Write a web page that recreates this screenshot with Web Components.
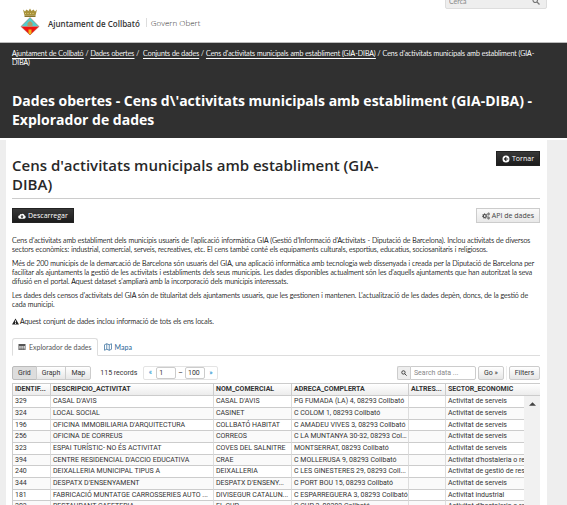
<!DOCTYPE html>
<html lang="ca">
<head>
<meta charset="utf-8">
<title>Dades obertes - Ajuntament de Collbató</title>
<style>
    * { box-sizing: border-box; }
    body {
        --title-font: "Open Sans", sans-serif;
        --grid-font: Roboto, "Liberation Sans", sans-serif;
        margin: 0;
        height: 100vh;
        overflow: hidden;
        background: #eee;
        color: #444;
        font-family: Lato, "Open Sans", sans-serif;
        font-size: 7px;
        line-height: 9px;
    }
</style>
</head>
<body>
<site-header></site-header>
<page-banner>Dades obertes - Cens d\'activitats municipals amb establiment (GIA-DIBA) - Explorador de dades</page-banner>
<dataset-page>
    <span slot="title">Cens d'activitats municipals amb establiment (GIA-DIBA)</span>
    <icon-button slot="back" kind="dark" icon="back">Tornar</icon-button>
    <icon-button slot="download" kind="dark" icon="cloud">Descarregar</icon-button>
    <icon-button slot="api" icon="cogs">API de dades</icon-button>
    <dataset-text></dataset-text>
    <tab-bar></tab-bar>
    <grid-toolbar></grid-toolbar>
    <data-grid></data-grid>
</dataset-page>

<script>
const icons = {
    cloud: '<path d="M13 7.2A3.6 3.6 0 0 0 7 4.5 2.2 2.2 0 0 0 3.6 6.6 3.4 3.4 0 0 0 4 13.5h8.2A3.2 3.2 0 0 0 13 7.2zM8 12.5 4.7 9.2h2.1V6.5h2.4v2.7h2.1z"/>',
    back: '<path fill-rule="evenodd" d="M8 1a7 7 0 1 0 0 14A7 7 0 0 0 8 1zM3.5 8l4.3-4.3 1.7 1.7L8 6.9h4.5v2.2H8l1.5 1.5-1.7 1.7z"/>',
    cogs: '<g fill="none" stroke="currentColor"><circle cx="5.5" cy="8" r="3" stroke-width="2.4"/><circle cx="5.5" cy="8" r="4.7" stroke-width="1.6" stroke-dasharray="2 1.7"/><circle cx="13" cy="4" r="1.6" stroke-width="1.5"/><circle cx="13" cy="12" r="1.6" stroke-width="1.5"/><circle cx="13" cy="4" r="2.6" stroke-dasharray="1 1"/><circle cx="13" cy="12" r="2.6" stroke-dasharray="1 1"/></g>',
    warning: '<path fill-rule="evenodd" d="M8 1 16 15H0zM7 5.5v5h2v-5zM7 11.5v2h2v-2z"/>',
    table: '<path fill-rule="evenodd" d="M1 2h14v12H1zM2.5 6v1.5h3V6zm4.2 0v1.5h3V6zm4.2 0v1.5h3V6zM2.5 8.6v1.5h3V8.6zm4.2 0v1.5h3V8.6zm4.2 0v1.5h3V8.6zM2.5 11.2v1.5h3v-1.5zm4.2 0v1.5h3v-1.5zm4.2 0v1.5h3v-1.5z"/>',
    map: '<path fill="none" stroke="currentColor" stroke-width="1.4" d="M1 3.5 5.5 1.5l5 2L15 1.5v11l-4.5 2-5-2-4.5 2zM5.5 1.5v11M10.5 3.5v11"/>',
    search: '<g fill="none" stroke="currentColor" stroke-width="2.4"><circle cx="6.5" cy="6.5" r="4.5"/><path d="m10 10 5 5"/></g>'
};

const icon = name => `<svg viewBox="0 0 16 16" fill="currentColor" aria-hidden="true">${icons[name]}</svg>`;

class SiteHeader extends HTMLElement {
    connectedCallback() {
        this.attachShadow({mode: 'open'}).innerHTML = `
            <style>
                :host {
                    display: flex;
                    justify-content: space-between;
                    align-items: flex-start;
                    height: 42px;
                    padding: 0 20px;
                    background: #fff;
                    overflow: hidden;
                    box-sizing: border-box;
                }
                .brand {
                    display: flex;
                    align-items: center;
                    padding-top: 8px;
                    font-family: var(--title-font);
                    font-size: 8px;
                    color: #333;
                }
                .crest { width: 20px; height: 28px; margin-right: 8px; }
                strong { font-weight: 600; padding-top: 2px; }
                .section {
                    margin-left: 6px;
                    padding-left: 4px;
                    border-left: 1px solid #ddd;
                    font-weight: 300;
                }
                form {
                    display: flex;
                    align-items: center;
                    width: 102px;
                    height: 16px;
                    margin-top: -7px;
                    padding: 0 6px 0 3px;
                    box-sizing: border-box;
                    border: 1px solid #ddd;
                    border-radius: 2px;
                    background: #eee;
                }
                input {
                    flex: 1;
                    min-width: 0;
                    padding: 0;
                    border: 0;
                    background: none;
                    font: inherit;
                }
                input::placeholder { color: #888; }
                button { display: flex; padding: 0; border: 0; background: none; color: #777; }
                button svg { width: 8px; height: 8px; }
            </style>
            <div class="brand">
                <svg class="crest" viewBox="0 0 40 56" aria-hidden="true">
                    <path d="M6 3l4 4 3-4 4 3 3-5 3 5 4-3 3 4 4-4-3 12H9z" fill="#a8923a"/>
                    <path d="M9 15h22v3H9z" fill="#8a7426"/>
                    <path d="M10 11h20" stroke="#e0cf7a" stroke-width="2" stroke-dasharray="2 3"/>
                    <path d="M20 19 38 37H2z" fill="#4fd0cf"/>
                    <path d="M2 37h36L20 54z" fill="#f01410"/>
                    <path d="M15 37v-7l5-4 5 4v7z" fill="#b09a68"/>
                    <path d="M17 43h6v8l-3 3-3-3z" fill="#f2b41d"/>
                    <path d="M20 19 38 37 20 54 2 37z" fill="none" stroke="#a35b45"/>
                </svg>
                <strong>Ajuntament de Collbató</strong>
                <span class="section">Govern Obert</span>
            </div>
            <form>
                <input type="search" placeholder="Cerca" aria-label="Cerca">
                <button type="button" aria-label="Cerca">${icon('search')}</button>
            </form>
        `;
    }
}

class PageBanner extends HTMLElement {
    connectedCallback() {
        this.attachShadow({mode: 'open'}).innerHTML = `
            <style>
                :host {
                    display: block;
                    height: 98px;
                    box-sizing: border-box;
                    padding: 6px 27px 0 12px;
                    background: #303030;
                    border-top: 1px solid #bbb;
                    border-bottom: 2px solid #fff;
                    color: #fff;
                }
                nav { height: 42px; font-weight: 300; text-shadow: 0 0 0 currentColor; }
                a {
                    color: #fff;
                    text-decoration: underline;
                    text-underline-offset: 2px;
                }
                h1 {
                    margin: 0;
                    font-family: var(--title-font);
                    font-size: 14px;
                    line-height: 19px;
                    font-weight: 700;
                }
            </style>
            <nav>
                <a href="#">Ajuntament de Collbató</a> <span>/</span>
                <a href="#">Dades obertes</a> <span>/</span> &nbsp;<a href="#">Conjunts de dades</a> <span>/</span>
                <a href="#">Cens d'activitats municipals amb establiment (GIA-DIBA)</a> <span>/</span>
                <span>Cens d'activitats municipals amb establiment (GIA-<wbr>DIBA)</span>
            </nav>
            <h1><slot></slot></h1>
        `;
    }
}

class IconButton extends HTMLElement {
    connectedCallback() {
        this.attachShadow({mode: 'open'}).innerHTML = `
            <style>
                :host { display: inline-flex; }
                button {
                    display: flex;
                    align-items: center;
                    gap: 2px;
                    height: 15px;
                    padding: 0 5px;
                    border: 1px solid #ccc;
                    background: linear-gradient(#fafafa, #e8e8e8);
                    color: #444;
                    font: inherit;
                    font-family: var(--title-font);
                    white-space: nowrap;
                }
                :host([kind="dark"]) button {
                    border-color: #222;
                    background: linear-gradient(#383838, #1c1c1c);
                    color: #fff;
                }
                svg { width: 8px; height: 8px; }
            </style>
            <button type="button">${icon(this.getAttribute('icon'))}<span><slot></slot></span></button>
        `;
    }
}

class DatasetPage extends HTMLElement {
    connectedCallback() {
        this.attachShadow({mode: 'open'}).innerHTML = `
            <style>
                :host {
                    display: block;
                    margin: 0 20px 0 6px;
                    padding: 11px 7px 0 6px;
                    background: #fff;
                }
                header, .actions { display: flex; justify-content: space-between; align-items: flex-start; }
                header { border-bottom: 1px solid #ccc; }
                h2 {
                    flex: 0 1 400px;
                    margin: 0;
                    padding: 5px 0 4px;
                    color: #282828;
                    font-family: var(--title-font);
                    font-size: 15px;
                    line-height: 19px;
                    font-weight: 600;
                }
                .actions { padding: 9px 0 13px; }
            </style>
            <header>
                <h2><slot name="title"></slot></h2>
                <slot name="back"></slot>
            </header>
            <div class="actions">
                <slot name="download"></slot>
                <slot name="api"></slot>
            </div>
            <slot></slot>
        `;
    }
}

class DatasetText extends HTMLElement {
    connectedCallback() {
        this.attachShadow({mode: 'open'}).innerHTML = `
            <style>
                :host { display: block; color: #222; font-weight: 300; text-shadow: 0 0 0 currentColor; }
                p { margin: 0 0 5px; }
                .note { display: flex; align-items: center; gap: 1px; margin: 8px 0 12px; }
                svg { width: 7px; height: 7px; }
            </style>
            <p>Cens d'activitats amb establiment dels municipis usuaris de l'aplicació informàtica GIA (Gestió d'Informació d'Activitats - Diputació de Barcelona). Inclou activitats de diversos sectors econòmics: industrial, comercial, serveis, recreatives, etc. El cens també conté els equipaments culturals, esportius, educatius, sociosanitaris i religiosos.</p>
            <p>Més de 200 municipis de la demarcació de Barcelona són usuaris del GIA, una aplicació informàtica amb tecnologia web dissenyada i creada per la Diputació de Barcelona per facilitar als ajuntaments la gestió de les activitats i establiments dels seus municipis. Les dades disponibles actualment són les d'aquells ajuntaments que han autoritzat la seva difusió en el portal. Aquest dataset s'ampliarà amb la incorporació dels municipis interessats.</p>
            <p>Les dades dels censos d'activitats del GIA són de titularitat dels ajuntaments usuaris, que les gestionen i mantenen. L'actualització de les dades depèn, doncs, de la gestió de cada municipi.</p>
            <p class="note">${icon('warning')}<span>Aquest conjunt de dades inclou informació de tots els ens locals.</span></p>
        `;
    }
}

class TabBar extends HTMLElement {
    connectedCallback() {
        this.attachShadow({mode: 'open'}).innerHTML = `
            <style>
                :host { display: flex; border-bottom: 1px solid #ddd; margin-bottom: 10px; }
                a {
                    display: flex;
                    align-items: center;
                    gap: 3px;
                    height: 18px;
                    margin-bottom: -1px;
                    padding: 0 5px;
                    box-sizing: border-box;
                    border: 1px solid transparent;
                    color: #2a6496;
                    text-decoration: none;
                }
                a.active {
                    border-color: #ddd #ddd #fff;
                    border-radius: 3px 3px 0 0;
                    color: #555;
                    background: #fff;
                }
                svg { width: 8px; height: 8px; }
            </style>
            <a class="active" href="#dades">${icon('table')}Explorador de dades</a>
            <a href="#mapa">${icon('map')}Mapa</a>
        `;
    }
}

class GridToolbar extends HTMLElement {
    connectedCallback() {
        this.attachShadow({mode: 'open'}).innerHTML = `
            <style>
                :host {
                    display: flex;
                    align-items: center;
                    height: 14px;
                    margin-bottom: 3px;
                    color: #333;
                    font-family: var(--grid-font);
                }
                button, input {
                    height: 14px;
                    box-sizing: border-box;
                    border: 1px solid #ccc;
                    font: inherit;
                    color: inherit;
                }
                button { padding: 0 5px; border-radius: 2px; background: linear-gradient(#fff, #e6e6e6); }
                .views { display: flex; }
                .views button { border-radius: 0; margin-left: -1px; }
                .views button:first-child { margin-left: 0; border-radius: 2px 0 0 2px; }
                .views button:last-child { border-radius: 0 2px 2px 0; }
                .views .active { background: #ddd; border-color: #bbb; }
                .count { margin: 0 6px 0 9px; }
                .pager { display: flex; align-items: center; border: 1px solid #e4e4e4; border-radius: 2px; height: 14px; box-sizing: border-box; }
                .pager a { width: 12px; text-align: center; color: #0088cc; text-decoration: none; }
                .pager input { width: 20px; height: 12px; padding: 0 2px; border-radius: 2px; }
                .pager span { padding: 0 2px; }
                .search { display: flex; margin-left: auto; }
                .search label {
                    display: flex;
                    align-items: center;
                    padding: 0 3px;
                    border: 1px solid #ccc;
                    border-right: 0;
                    border-radius: 2px 0 0 2px;
                    background: #eee;
                }
                .search input { width: 66px; padding: 0 3px; border-radius: 0 2px 2px 0; }
                .search input::placeholder { color: #888; }
                .search button { margin-left: 2px; }
                .filters { margin-left: 2px; padding-left: 2px; border-left: 1px solid #eee; }
                svg { width: 6px; height: 6px; }
            </style>
            <div class="views">
                <button type="button" class="active">Grid</button>
                <button type="button">Graph</button>
                <button type="button">Map</button>
            </div>
            <span class="count">115 records</span>
            <div class="pager">
                <a href="#prev">«</a>
                <input type="text" value="1" aria-label="From">
                <span>–</span>
                <input type="text" value="100" aria-label="To">
                <a href="#next">»</a>
            </div>
            <form class="search">
                <label for="q" aria-label="Search">${icon('search')}</label>
                <input id="q" type="text" placeholder="Search data ...">
                <button type="button">Go »</button>
            </form>
            <div class="filters"><button type="button">Filters</button></div>
        `;
    }
}

class DataGrid extends HTMLElement {
    constructor() {
        super();
        this.columns = ['IDENTIF...', 'DESCRIPCIO_ACTIVITAT', 'NOM_COMERCIAL', 'ADRECA_COMPLERTA', 'ALTRES...', 'SECTOR_ECONOMIC'];
        this.rows = [
            ['329', "CASAL D'AVIS", "CASAL D'AVIS", 'PG FUMADA (LA) 4, 08293 Collbató', '', 'Activitat de serveis'],
            ['324', 'LOCAL SOCIAL', 'CASINET', 'C COLOM 1, 08293 Collbató', '', 'Activitat de serveis'],
            ['196', "OFICINA IMMOBILIARIA D'ARQUITECTURA", 'COLLBATÓ HABITAT', 'C AMADEU VIVES 3, 08293 Collbató', '', 'Activitat de serveis'],
            ['256', 'OFICINA DE CORREUS', 'CORREOS', 'C LA MUNTANYA 30-32, 08293 Coll...', '', 'Activitat de serveis'],
            ['323', 'ESPAI TURÍSTIC- NO ÉS ACTIVITAT', 'COVES DEL SALNITRE', 'MONTSERRAT, 08293 Collbató', '', 'Activitat de serveis'],
            ['394', "CENTRE RESIDENCIAL D'ACCIO EDUCATIVA", 'CRAE', 'C MOLLERUSA 9, 08293 Collbató', '', "Activitat d'hostaleria o rest"],
            ['240', 'DEIXALLERIA MUNICIPAL TIPUS A', 'DEIXALLERIA', 'C LES GINESTERES 29, 08293 Coll...', '', 'Activitat de gestió de resid'],
            ['344', "DESPATX D'ENSENYAMENT", "DESPATX D'ENSENY...", 'C PORT BOU 15, 08293 Collbató', '', 'Activitat de serveis'],
            ['181', 'FABRICACIÓ MUNTATGE CARROSSERIES AUTO ...', 'DIVISEGUR CATALUN...', 'C ESPARREGUERA 3, 08293 Collbató', '', 'Activitat industrial'],
            ['203', 'RESTAURANT CAFETERIA', 'EL CUP', 'C CUP 2, 08293 Collbató', '', "Activitat d'hostaleria o rest"]
        ];
    }

    connectedCallback() {
        this.attachShadow({mode: 'open'}).innerHTML = `
            <style>
                :host {
                    display: block;
                    position: relative;
                    color: #333;
                    font-family: var(--grid-font);
                }
                table {
                    width: 100%;
                    table-layout: fixed;
                    border-collapse: separate;
                    border-spacing: 0;
                    border-left: 1px solid #ccc;
                }
                th, td {
                    padding: 0 0 0 2px;
                    overflow: hidden;
                    text-align: left;
                    text-overflow: ellipsis;
                    white-space: nowrap;
                }
                th {
                    height: 13px;
                    box-sizing: border-box;
                    border: solid #ccc;
                    border-width: 1px 1px 1px 0;
                    background: linear-gradient(#fff, #ececec);
                }
                tr { height: 12px; }
                tbody tr:nth-child(3n) { height: 11px; }
                td {
                    border-right: 1px solid #ddd;
                    border-bottom: 1px solid #ccc;
                    background: #fff;
                }
                tr:nth-child(even) td { background: #fafafa; }
                th:last-child, td:last-child { border-right: 0; }
                .scroll {
                    position: absolute;
                    top: 13px;
                    right: 0;
                    bottom: 0;
                    width: 16px;
                    background: #f1f1f1;
                }
                .scroll button {
                    display: flex;
                    justify-content: center;
                    align-items: center;
                    width: 100%;
                    height: 16px;
                    padding: 0;
                    border: 0;
                    background: none;
                }
                .scroll svg { width: 7px; height: 4px; }
            </style>
            <table>
                <colgroup>
                    ${[38, 163, 78, 117, 37].map(w => `<col style="width: ${w}px">`).join('')}
                    <col>
                </colgroup>
                <thead>
                    <tr>${this.columns.map(name => `<th>${name}</th>`).join('')}</tr>
                </thead>
                <tbody>
                    ${this.rows.map(row => `<tr>${row.map(cell => `<td>${cell}</td>`).join('')}</tr>`).join('')}
                </tbody>
            </table>
            <div class="scroll">
                <button type="button" aria-label="Scroll up"><svg viewBox="0 0 8 4"><path d="M0 4 4 0l4 4z" fill="#444"/></svg></button>
            </div>
        `;
    }
}

customElements.define('site-header', SiteHeader);
customElements.define('page-banner', PageBanner);
customElements.define('icon-button', IconButton);
customElements.define('dataset-page', DatasetPage);
customElements.define('dataset-text', DatasetText);
customElements.define('tab-bar', TabBar);
customElements.define('grid-toolbar', GridToolbar);
customElements.define('data-grid', DataGrid);
</script>
</body>
</html>
